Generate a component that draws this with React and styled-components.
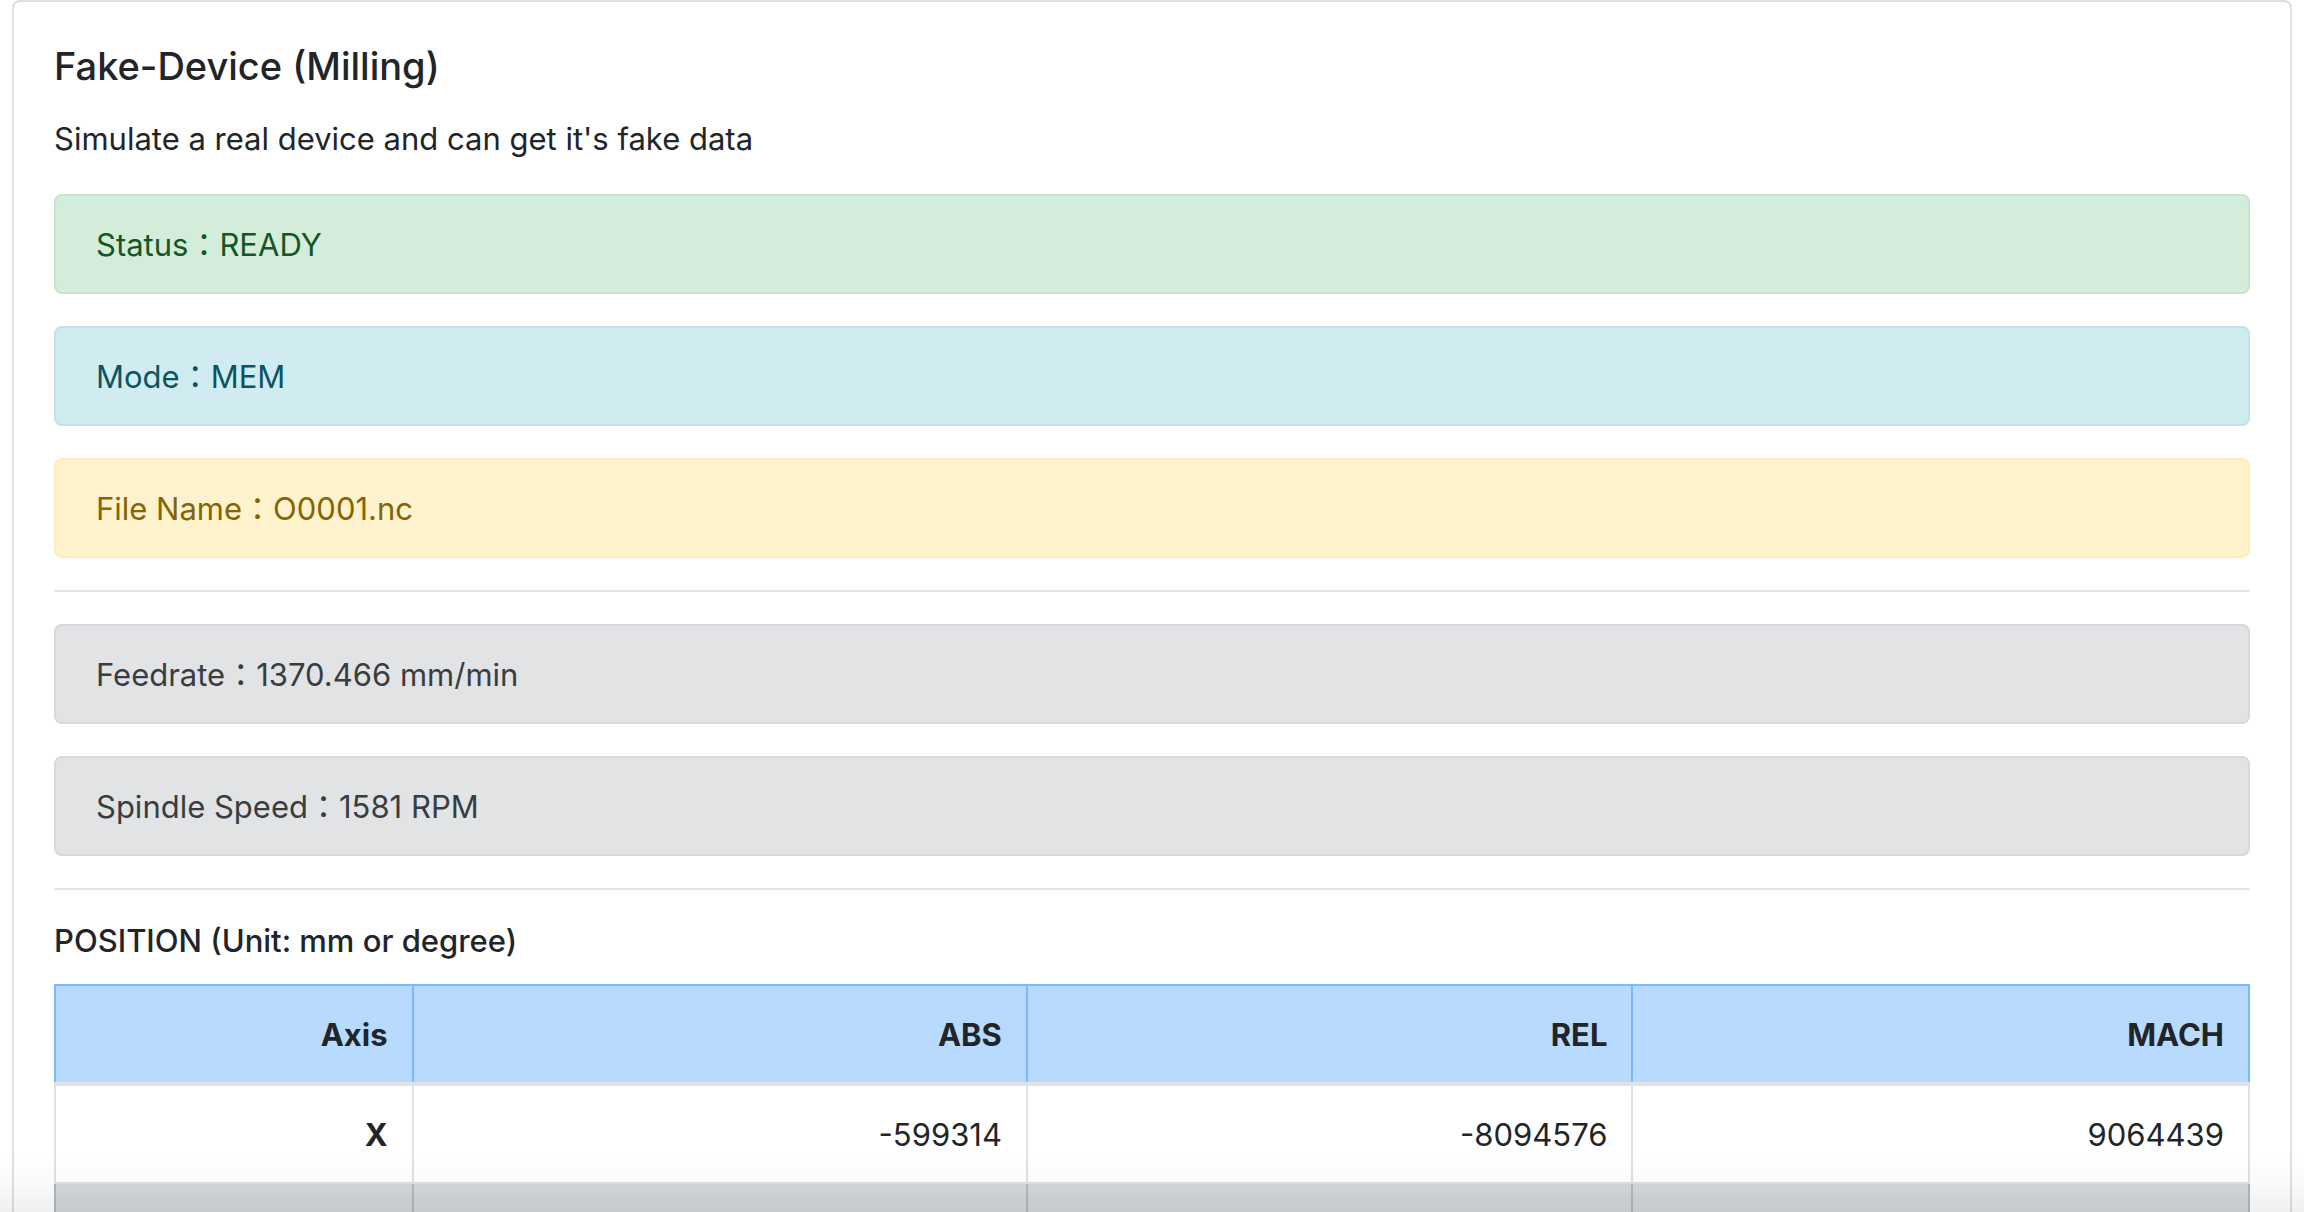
import React from "react";
import styled, { createGlobalStyle } from "styled-components";

const GlobalStyle = createGlobalStyle`
  *, *::before, *::after { box-sizing: border-box; }
  body {
    margin: 0;
    background: #fff;
    color: #212529;
    font-family: Inter, "Noto Sans CJK TC", sans-serif;
    font-size: 31px;
    line-height: 48px;
  }
`;

const Page = styled.main`
  height: 100vh;
  padding: 0 12px;
  overflow: hidden;
`;

const Card = styled.section`
  min-height: calc(100vh + 48px);
  padding: 40px;
  border: 2px solid #dfdfdf;
  border-radius: 8px;
  background: #fff;
`;

const Title = styled.h1`
  margin: 0 0 25px;
  font-size: 38px;
  font-weight: 500;
  line-height: 48px;
`;

const Subtitle = styled.h2`
  margin: 0 0 24px;
  font-size: 31px;
  font-weight: 500;
  line-height: 38px;
`;

const Description = styled.p`
  margin: 0 0 31px;
`;

const tones = {
  success: { text: "#155724", fill: "#d4edda", line: "#c3e6cb" },
  info: { text: "#0c5460", fill: "#d1ecf1", line: "#bee5eb" },
  warning: { text: "#856404", fill: "#fff3cd", line: "#ffeeba" },
  secondary: { text: "#383d41", fill: "#e2e3e5", line: "#d6d8db" },
};

const Alert = styled.div`
  margin-bottom: 32px;
  padding: 25px 40px 23px;
  border: 2px solid ${({ $tone }) => tones[$tone].line};
  border-radius: 8px;
  background: ${({ $tone }) => tones[$tone].fill};
  color: ${({ $tone }) => tones[$tone].text};
`;

const Divider = styled.hr`
  margin: 32px 0;
  border: 0;
  border-top: 2px solid #e5e5e5;
`;

const Table = styled.table`
  width: 100%;
  table-layout: fixed;
  border-collapse: collapse;
  text-align: right;
`;

const Column = styled.col`
  width: ${({ $share }) => $share}%;
`;

const HeadCell = styled.th`
  padding: 25px 24px 23px;
  border: 2px solid #7abaff;
  border-bottom: 4px solid #dee2e6;
  background: #b8daff;
  font-weight: 700;
`;

const Cell = styled.td`
  height: 98px;
  padding: 25px 24px 23px;
  border: 2px solid ${({ $shaded }) => ($shaded ? "#b3b7bb" : "#dee2e6")};
  border-top-color: #dee2e6;
  background: ${({ $shaded }) => ($shaded ? "#d4d8db" : "transparent")};
`;

const BottomShade = styled.div`
  position: fixed;
  right: 0;
  bottom: 0;
  left: 0;
  height: 56px;
  background: linear-gradient(rgba(0, 0, 0, 0), rgba(0, 0, 0, 0.02) 50%, rgba(0, 0, 0, 0.06));
  pointer-events: none;
`;

const columns = [
  { name: "Axis", share: 16.3 },
  { name: "ABS", share: 28 },
  { name: "REL", share: 27.6 },
  { name: "MACH", share: 28.1 },
];

const machineState = [
  { label: "Status", value: "READY", tone: "success" },
  { label: "Mode", value: "MEM", tone: "info" },
  { label: "File Name", value: "O0001.nc", tone: "warning" },
];

const speeds = [
  { label: "Feedrate", value: "1370.466 mm/min", tone: "secondary" },
  { label: "Spindle Speed", value: "1581 RPM", tone: "secondary" },
];

const Readings = ({ items }) =>
  items.map(({ label, value, tone }) => (
    <Alert key={label} $tone={tone}>{`${label}：${value}`}</Alert>
  ));

export default function App() {
  return (
    <Page>
      <GlobalStyle />
      <Card>
        <Title>Fake-Device (Milling)</Title>
        <Description>Simulate a real device and can get it's fake data</Description>
        <Readings items={machineState} />
        <Divider />
        <Readings items={speeds} />
        <Divider />
        <Subtitle id="position">POSITION (Unit: mm or degree)</Subtitle>
        <Table aria-labelledby="position">
          <colgroup>
            {columns.map((c) => <Column key={c.name} $share={c.share} />)}
          </colgroup>
          <thead>
            <tr>
              {columns.map((c) => <HeadCell key={c.name} scope="col">{c.name}</HeadCell>)}
            </tr>
          </thead>
          <tbody>
            <tr>
              <Cell as="th" scope="row">X</Cell>
              <Cell>-599314</Cell>
              <Cell>-8094576</Cell>
              <Cell>9064439</Cell>
            </tr>
            <tr>
              {columns.map((c) => <Cell key={c.name} $shaded />)}
            </tr>
          </tbody>
        </Table>
      </Card>
      <BottomShade />
    </Page>
  );
}
